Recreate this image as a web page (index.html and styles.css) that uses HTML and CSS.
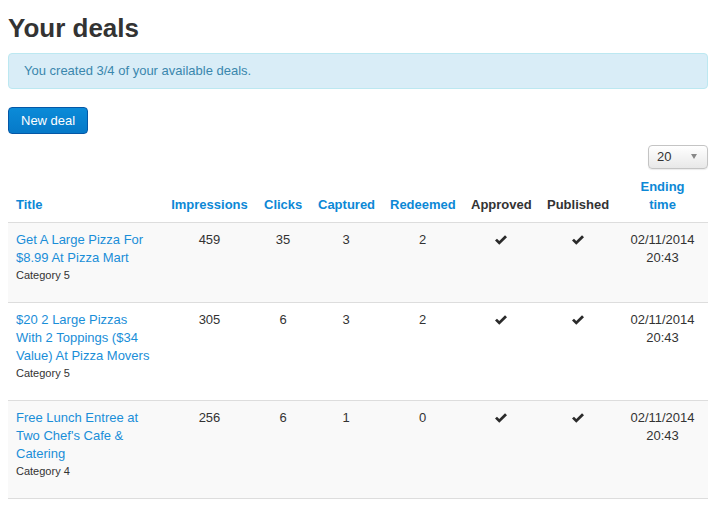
FILE: index.html
```html
<!DOCTYPE html>
<html>
<head>
<meta charset="utf-8">
<link rel="stylesheet" href="styles.css">
</head>
<body>
<div class="page">
  <h1 class="title">Your deals</h1>
  <div class="alert">You created 3/4 of your available deals.</div>
  <a class="btn-primary" href="#">New deal</a>
  <div class="toolbar">
    <div class="select"><span>20</span><span class="caret"></span></div>
  </div>
  <table class="deals">
    <colgroup>
      <col class="c-title"><col class="c-imp"><col class="c-clicks"><col class="c-capt"><col class="c-red"><col class="c-appr"><col class="c-pub"><col class="c-end">
    </colgroup>
    <thead>
      <tr>
        <th class="left"><a href="#">Title</a></th>
        <th><a href="#">Impressions</a></th>
        <th><a href="#">Clicks</a></th>
        <th><a href="#">Captured</a></th>
        <th><a href="#">Redeemed</a></th>
        <th>Approved</th>
        <th>Published</th>
        <th><a class="narrow" href="#">Ending time</a></th>
      </tr>
    </thead>
    <tbody>
      <tr class="odd">
        <td class="left"><a href="#">Get A Large Pizza For $8.99 At Pizza Mart</a><div class="cat">Category 5</div></td>
        <td>459</td><td>35</td><td>3</td><td>2</td>
        <td><svg class="ok" viewBox="0 0 14 11"><path d="M0 6.2 L2.3 4 L5 6.6 L11.7 0 L14 2.3 L5 11 Z"/></svg></td>
        <td><svg class="ok" viewBox="0 0 14 11"><path d="M0 6.2 L2.3 4 L5 6.6 L11.7 0 L14 2.3 L5 11 Z"/></svg></td>
        <td>02/11/2014 20:43</td>
      </tr>
      <tr>
        <td class="left"><a href="#">$20 2 Large Pizzas With 2 Toppings ($34 Value) At Pizza Movers</a><div class="cat">Category 5</div></td>
        <td>305</td><td>6</td><td>3</td><td>2</td>
        <td><svg class="ok" viewBox="0 0 14 11"><path d="M0 6.2 L2.3 4 L5 6.6 L11.7 0 L14 2.3 L5 11 Z"/></svg></td>
        <td><svg class="ok" viewBox="0 0 14 11"><path d="M0 6.2 L2.3 4 L5 6.6 L11.7 0 L14 2.3 L5 11 Z"/></svg></td>
        <td>02/11/2014 20:43</td>
      </tr>
      <tr class="odd">
        <td class="left"><a href="#">Free Lunch Entree at Two Chef's Cafe &amp; Catering</a><div class="cat">Category 4</div></td>
        <td>256</td><td>6</td><td>1</td><td>0</td>
        <td><svg class="ok" viewBox="0 0 14 11"><path d="M0 6.2 L2.3 4 L5 6.6 L11.7 0 L14 2.3 L5 11 Z"/></svg></td>
        <td><svg class="ok" viewBox="0 0 14 11"><path d="M0 6.2 L2.3 4 L5 6.6 L11.7 0 L14 2.3 L5 11 Z"/></svg></td>
        <td>02/11/2014 20:43</td>
      </tr>
    </tbody>
  </table>
</div>
</body>
</html>
```

FILE: styles.css
```css
html, body {
  margin: 0;
  padding: 0;
  background: #fff;
}
body {
  font-family: "Liberation Sans", Arial, Helvetica, sans-serif;
  font-size: 13px;
  line-height: 18px;
  color: #333;
}
.page {
  padding: 0 7px 0 8px;
}
.title {
  margin: 10px 0 7px;
  font-size: 26px;
  line-height: 36px;
  font-weight: bold;
  color: #333;
}
.alert {
  background: #d9edf7;
  border: 1px solid #bce8f1;
  border-radius: 4px;
  color: #3a87ad;
  padding: 8px 15px;
  margin-bottom: 18px;
}
.btn-primary {
  display: inline-block;
  padding: 4px 12px;
  line-height: 17px;
  font-size: 13px;
  color: #fff;
  text-decoration: none;
  background: linear-gradient(#0b8bd8, #0679c8);
  border: 1px solid #0457a6;
  border-radius: 4px;
}
.toolbar {
  display: flex;
  justify-content: flex-end;
  margin-top: 11px;
  margin-bottom: 1px;
}
.select {
  width: 60px;
  height: 24px;
  box-sizing: border-box;
  border: 1px solid #c4c4c4;
  border-radius: 4px;
  background: linear-gradient(#ffffff, #e8e8e8);
  box-shadow: 0 1px 1px rgba(0,0,0,0.08);
  display: flex;
  align-items: center;
  justify-content: space-between;
  padding: 0 10px 0 8px;
  font-size: 13px;
  color: #333;
}
.caret {
  width: 0;
  height: 0;
  border-left: 3.5px solid transparent;
  border-right: 3.5px solid transparent;
  border-top: 5px solid #888;
  margin-top: -2px;
}
.deals {
  width: 700px;
  table-layout: fixed;
  border-collapse: collapse;
  border-spacing: 0;
}
.c-title { width: 155px; }
.c-imp { width: 93px; }
.c-clicks { width: 54px; }
.c-capt { width: 72px; }
.c-red { width: 81px; }
.c-appr { width: 76px; }
.c-pub { width: 78px; }
.c-end { width: 91px; }
.deals th, .deals td {
  padding: 8px;
  text-align: center;
  border-bottom: 1px solid #dddddd;
  line-height: 18px;
}
.deals th {
  vertical-align: bottom;
  font-weight: bold;
  color: #333;
}
.deals td {
  vertical-align: top;
}
.deals .left {
  text-align: left;
}
.deals a {
  color: #1a8ed8;
  text-decoration: none;
}
.deals th a {
  color: #0c88d6;
}
.deals th a.narrow {
  display: inline-block;
  max-width: 56px;
}
.deals tr.odd td {
  background: #f9f9f9;
}
.cat {
  font-size: 11px;
  line-height: 16px;
  color: #333;
  margin-bottom: 11px;
}
.ok {
  width: 12px;
  height: 10px;
  fill: #2b2b2b;
  margin-top: 4px;
}
```
